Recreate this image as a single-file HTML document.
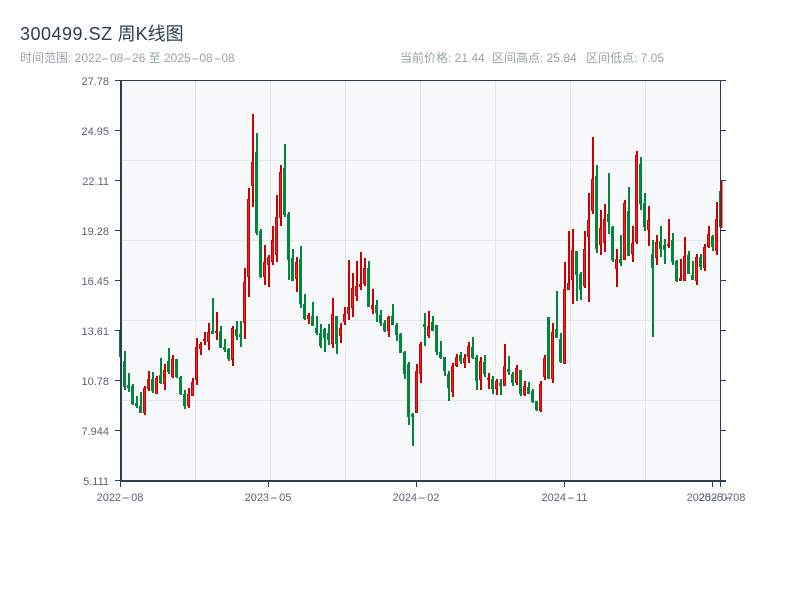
<!DOCTYPE html>
<html lang="zh">
<head>
<meta charset="utf-8">
<title>300499.SZ 周K线图</title>
<style>
html,body{margin:0;padding:0;background:#fff}
body{width:800px;height:600px;position:relative;overflow:hidden;font-family:"Liberation Sans","Noto Sans CJK SC",sans-serif}
.t{position:absolute;white-space:nowrap}
.title{left:20px;top:22px;font-size:18px;line-height:24px;color:#2c3e50}
.title b{font-weight:normal;letter-spacing:.5px}
.sub{top:50px;font-size:12px;line-height:16px;color:#95a5a6}
.y{right:691px;font-size:11px;line-height:14px;color:#5a6472;text-align:right}
.x{top:491px;font-size:11px;line-height:14px;color:#5a6472;transform:translateX(-50%)}
.h{display:inline-block;width:.72em;text-align:center;transform:scaleX(2.1)}
.x .h{width:.92em;transform:scaleX(2.2)}
svg{position:absolute;left:0;top:0}
</style>
</head>
<body>
<svg width="800" height="600" viewBox="0 0 800 600" shape-rendering="crispEdges">
<rect x="121" y="81" width="600" height="400" fill="#f8f9fb"/>
<path d="M195.5 81V481M270.5 81V481M345.5 81V481M420.5 81V481M495.5 81V481M570.5 81V481M645.5 81V481M121 160.5H721M121 240.5H721M121 320.5H721M121 400.5H721" stroke="#e3e6eb" stroke-width="1" fill="none"/>

<!-- green wicks -->
<path fill="none" stroke="#00873c" stroke-width="2" d="M125 351V390M129 373V392M133 384V405M137 396V408M141 392V413M153 372V393M161 358V384M169 348V374M177 359V378M181 376V395M185 390V409M213 298V334M221 326V348M225 339V352M229 348V361M237 321V340M241 321V347M257 133V235M261 229V278M285 144V217M289 212V280M293 249V281M301 246V308M305 294V320M313 302V326M317 316V335M321 324V348M325 328V352M329 324V345M337 316V354M369 261V307M377 300V322M381 310V326M385 320V332M393 304V325M397 323V341M401 333V353M405 351V379M409 362V425M413 413V446M425 313V346M433 316V331M437 325V355M441 341V359M445 357V376M449 371V401M461 352V364M473 337V359M477 355V390M485 355V377M493 376V394M501 379V395M509 356V375M513 372V386M521 370V396M529 382V394M533 389V403M537 401V411M549 317V379M557 291V338M561 333V363M577 251V301M581 272V300M597 165V253M609 173V234M613 226V262M621 235V266M629 187V256M641 157V210M645 193V231M653 240V337M661 226V257M665 239V264M673 233V265M677 260V282M689 251V274M693 261V280M701 254V270M713 235V251"/>
<!-- green bodies -->
<path fill="none" stroke="#00873c" stroke-width="3" d="M124.5 361V387M128.5 385V388M132.5 386V404M136.5 403V406M140.5 406V413M152.5 379V391M160.5 375V383M168.5 361V372M176.5 359V377M180.5 377V394M184.5 394V406M212.5 331V334M220.5 331V348M224.5 347V350M228.5 349V359M236.5 329V336M240.5 334V337M256.5 152V233M260.5 231V277M284.5 168V215M288.5 214V260M292.5 258V281M300.5 259V304M304.5 304V319M312.5 316V326M316.5 328V333M320.5 333V346M324.5 329V338M328.5 333V340M336.5 316V344M368.5 268V307M376.5 305V313M380.5 315V323M384.5 323V331M392.5 316V325M396.5 325V335M400.5 334V353M404.5 352V374M408.5 364V417M412.5 414V417M424.5 324V327M432.5 322V331M436.5 325V352M440.5 352V358M444.5 357V371M448.5 374V388M460.5 355V361M472.5 347V358M476.5 357V381M484.5 362V374M492.5 379V389M500.5 383V386M508.5 369V372M512.5 374V383M520.5 370V394M528.5 387V394M532.5 391V402M536.5 401V410M548.5 317V379M556.5 329V338M560.5 339V362M576.5 251V275M580.5 274V290M596.5 176V249M608.5 214V222M612.5 227V260M620.5 259V263M628.5 211V256M640.5 164V204M644.5 203V227M652.5 254V268M660.5 241V249M664.5 245V250M672.5 240V262M676.5 261V281M688.5 255V274M692.5 275V280M700.5 257V267M712.5 236V247"/>
<!-- first and last clipped candles -->
<rect x="119" y="330" width="2" height="27" fill="#00873c"/>
<rect x="719" y="191" width="2" height="36" fill="#00873c"/>
<rect x="721" y="180" width="1.5" height="48" fill="#c80000"/>

<!-- red wicks -->
<path fill="none" stroke="#cc0000" stroke-width="2" d="M145 386V415M149 371V391M157 376V394M165 364V390M173 355V378M189 388V408M193 378V396M197 338V385M201 342V355M205 332V345M209 323V350M217 312V340M233 326V366M245 268V339M249 188V297M253 114V207M265 245V285M269 255V287M273 226V265M277 195V262M281 165V226M297 257V292M309 313V324M333 298V348M341 323V343M345 307V325M349 260V320M353 273V317M357 261V301M361 252V290M365 258V286M373 289V314M389 316V337M417 364V413M421 342V383M429 311V338M453 363V397M457 354V367M465 354V368M469 342V363M481 357V390M489 373V389M497 379V395M505 344V386M517 365V385M525 381V396M541 381V412M545 355V380M553 323V383M565 262V364M569 231V290M573 229V304M585 231V288M589 193V302M593 137V214M601 210V255M605 204V252M617 249V287M625 200V260M633 226V262M637 151V244M649 206V246M657 235V265M669 219V248M681 259V281M685 237V281M697 254V285M705 244V271M709 226V248M717 202V255"/>
<!-- red bodies: border -->
<path fill="none" stroke="#cc0000" stroke-width="3" d="M144.5 388V413M148.5 379V389M156.5 378V394M164.5 370V384M172.5 359V377M188.5 394V406M192.5 382V396M196.5 347V380M200.5 344V349M204.5 339V341M208.5 332V342M216.5 331V333M232.5 328V360M244.5 282V323M248.5 199V277M252.5 162V186M264.5 262V277M268.5 257V265M272.5 240V262M276.5 217V255M280.5 172V218M296.5 262V279M308.5 315V319M332.5 314V344M340.5 328V336M344.5 314V322M348.5 307V314M352.5 288V308M356.5 286V296M360.5 284V287M364.5 268V284M372.5 305V309M388.5 317V331M416.5 371V413M420.5 344V374M428.5 326V336M452.5 366V392M456.5 357V366M464.5 358V363M468.5 346V357M480.5 361V380M488.5 378V380M496.5 381V389M504.5 366V386M516.5 368V383M524.5 386V395M540.5 384V411M544.5 358V377M552.5 332V379M564.5 289V364M568.5 283V290M572.5 250V280M584.5 249V286M588.5 220V237M592.5 179V211M600.5 228V245M604.5 219V243M616.5 259V269M624.5 203V260M632.5 243V254M636.5 155V242M648.5 220V230M656.5 242V258M668.5 244V246M680.5 278V281M684.5 256V281M696.5 257V281M704.5 247V268M708.5 234V247M716.5 219V251"/>
<!-- red bodies: fill -->
<path fill="none" stroke="#f41f1f" stroke-width="1" d="M144.5 389V412M148.5 380V388M156.5 379V393M164.5 371V383M172.5 360V376M188.5 395V405M192.5 383V395M196.5 348V379M200.5 345V348M208.5 333V341M232.5 329V359M244.5 283V322M248.5 200V276M252.5 163V185M264.5 263V276M268.5 258V264M272.5 241V261M276.5 218V254M280.5 173V217M296.5 263V278M308.5 316V318M332.5 315V343M340.5 329V335M344.5 315V321M348.5 308V313M352.5 289V307M356.5 287V295M360.5 285V286M364.5 269V283M372.5 306V308M388.5 318V330M416.5 372V412M420.5 345V373M428.5 327V335M452.5 367V391M456.5 358V365M464.5 359V362M468.5 347V356M480.5 362V379M496.5 382V388M504.5 367V385M516.5 369V382M524.5 387V394M540.5 385V410M544.5 359V376M552.5 333V378M564.5 290V363M568.5 284V289M572.5 251V279M584.5 250V285M588.5 221V236M592.5 180V210M600.5 229V244M604.5 220V242M616.5 260V268M624.5 204V259M632.5 244V253M636.5 156V241M648.5 221V229M656.5 243V257M680.5 279V280M684.5 257V280M696.5 258V280M704.5 248V267M708.5 235V246M716.5 220V250"/>

<!-- axes -->
<path fill="none" stroke="#2c3e50" stroke-width="1" d="M115 80.5H726M720.5 81V481M115 130.5H120M115 180.5H120M115 230.5H120M115 280.5H120M115 330.5H120M115 380.5H120M115 430.5H120M115 480.5H120M721 130.5H726M721 180.5H726M721 230.5H726M721 280.5H726M721 330.5H726M721 380.5H726M721 430.5H726M120.5 482V487M268.5 482V487M416.5 482V487M564.5 482V487M712.5 482V487M720.5 482V487"/>
<path fill="none" stroke="#2c3e50" stroke-width="2" d="M121 80V482M120 481H726"/>
</svg>

<div class="t title"><b>300499.SZ</b> 周K线图</div>
<div class="t sub" style="left:20px">时间范围: 2022<span class="h">-</span>08<span class="h">-</span>26 至 2025<span class="h">-</span>08<span class="h">-</span>08</div>
<div class="t sub" style="left:400px">当前价格: 21.44</div>
<div class="t sub" style="left:492px">区间高点: 25.84</div>
<div class="t sub" style="left:586px">区间低点: 7.05</div>

<div class="t y" style="top:75px">27.78</div>
<div class="t y" style="top:125px">24.95</div>
<div class="t y" style="top:175px">22.11</div>
<div class="t y" style="top:225px">19.28</div>
<div class="t y" style="top:275px">16.45</div>
<div class="t y" style="top:325px">13.61</div>
<div class="t y" style="top:375px">10.78</div>
<div class="t y" style="top:425px">7.944</div>
<div class="t y" style="top:475px">5.111</div>

<div class="t x" style="left:120px">2022<span class="h">-</span>08</div>
<div class="t x" style="left:268px">2023<span class="h">-</span>05</div>
<div class="t x" style="left:416px">2024<span class="h">-</span>02</div>
<div class="t x" style="left:564.5px">2024<span class="h">-</span>11</div>
<div class="t x" style="left:710px">2025<span class="h">-</span>07</div>
<div class="t x" style="left:722px">2025<span class="h">-</span>08</div>
</body>
</html>
